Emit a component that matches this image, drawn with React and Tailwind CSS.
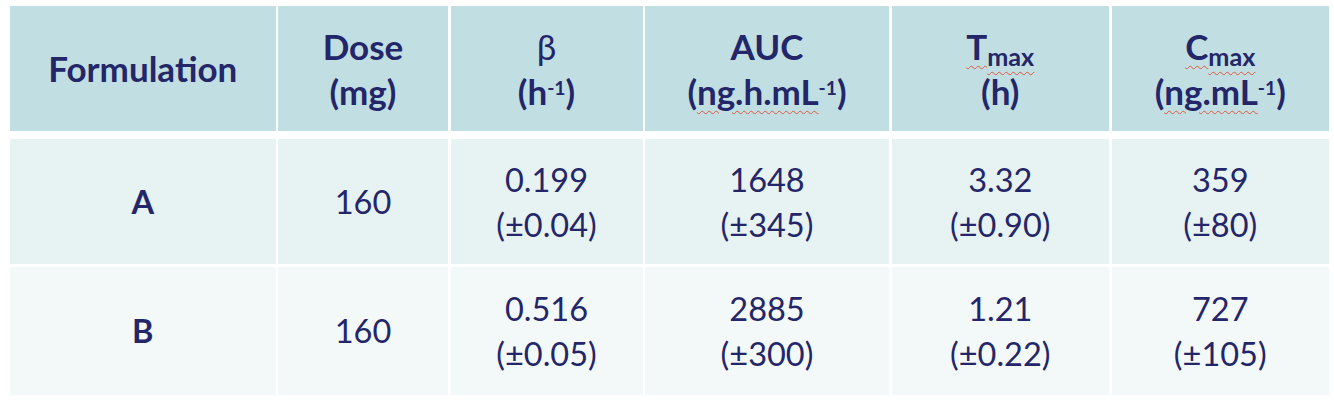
import React from "react";

const squiggle =
  "underline decoration-wavy decoration-[#e4553c] decoration-1 underline-offset-[5px]";

const cols = "grid grid-cols-[265.5px_170px_192px_244px_217.5px_217.5px] gap-x-[2.5px]";

const rows = [
  { name: "A", dose: "160", beta: ["0.199", "(±0.04)"], auc: ["1648", "(±345)"], tmax: ["3.32", "(±0.90)"], cmax: ["359", "(±80)"] },
  { name: "B", dose: "160", beta: ["0.516", "(±0.05)"], auc: ["2885", "(±300)"], tmax: ["1.21", "(±0.22)"], cmax: ["727", "(±105)"] },
];

const Cell = ({ bg, children, bold }) => (
  <div
    className={`${bg} flex flex-col items-center justify-center text-center leading-[45px] ${
      bold ? "font-bold" : "font-normal"
    }`}
  >
    {children}
  </div>
);

const Stack = ({ lines }) => (
  <>
    <span>{lines[0]}</span>
    <span>{lines[1]}</span>
  </>
);

const App = () => {
  return (
    <div
      className="w-[1334px] h-[410px] bg-white pl-[10px] pt-[6px] text-[#24266a]"
      style={{ fontFamily: "Lato, 'Open Sans', sans-serif" }}
    >
      <div className={`${cols} h-[125px] text-[35px]`}>
        <Cell bg="bg-[#c1dfe2]" bold>
          <span>Formulation</span>
        </Cell>
        <Cell bg="bg-[#c1dfe2]" bold>
          <span>Dose</span>
          <span>(mg)</span>
        </Cell>
        <Cell bg="bg-[#c1dfe2]" bold>
          <span className="font-normal">β</span>
          <span>
            (h<sup className="text-[0.55em]">-1</sup>)
          </span>
        </Cell>
        <Cell bg="bg-[#c1dfe2]" bold>
          <span>AUC</span>
          <span>
            (<span className={squiggle}>ng.h.mL</span>
            <sup className="text-[0.55em]">-1</sup>)
          </span>
        </Cell>
        <Cell bg="bg-[#c1dfe2]" bold>
          <span>
            <span className={squiggle}>T</span>
            <sub className={`text-[0.72em] ${squiggle}`}>max</sub>
          </span>
          <span>(h)</span>
        </Cell>
        <Cell bg="bg-[#c1dfe2]" bold>
          <span>
            <span className={squiggle}>C</span>
            <sub className={`text-[0.72em] ${squiggle}`}>max</sub>
          </span>
          <span>
            (<span className={squiggle}>ng.mL</span>
            <sup className="text-[0.55em]">-1</sup>)
          </span>
        </Cell>
      </div>

      <div className="flex flex-col gap-y-[3px] mt-[8px] text-[32.5px]">
        {rows.map((r, i) => {
          const bg = i === 0 ? "bg-[#e7f2f3]" : "bg-[#f3f8f9]";
          return (
            <div key={r.name} className={`${cols} ${i === 0 ? "h-[125px]" : "h-[127.5px]"}`}>
              <Cell bg={bg} bold>
                <span>{r.name}</span>
              </Cell>
              <Cell bg={bg}>
                <span>{r.dose}</span>
              </Cell>
              <Cell bg={bg}>
                <Stack lines={r.beta} />
              </Cell>
              <Cell bg={bg}>
                <Stack lines={r.auc} />
              </Cell>
              <Cell bg={bg}>
                <Stack lines={r.tmax} />
              </Cell>
              <Cell bg={bg}>
                <Stack lines={r.cmax} />
              </Cell>
            </div>
          );
        })}
      </div>
    </div>
  );
};

export default App;
